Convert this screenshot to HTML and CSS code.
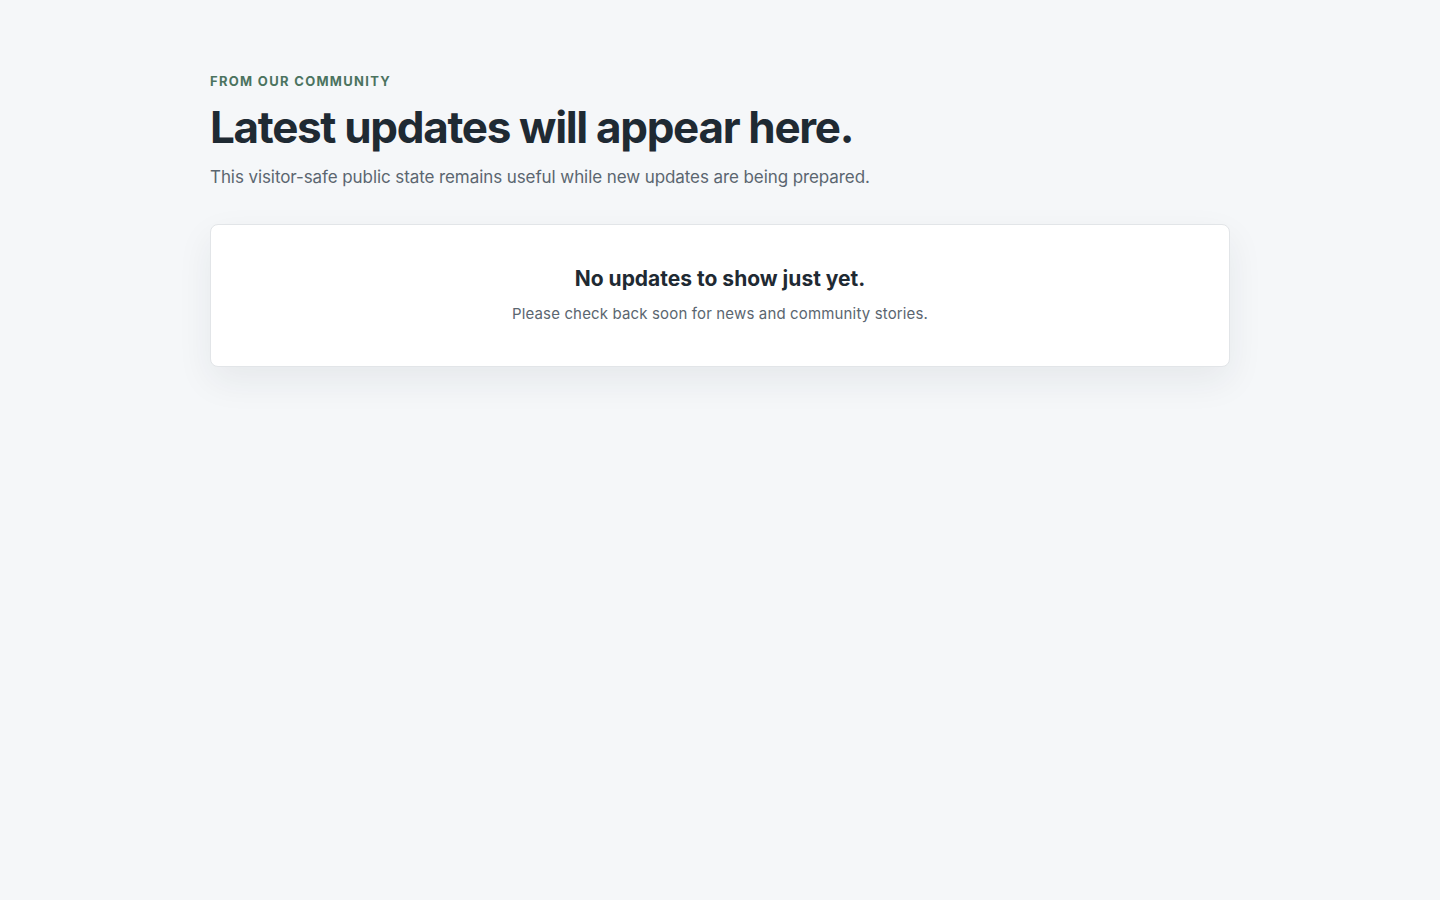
FILE: index.html
```html
<!DOCTYPE html>
<html lang="en">
<head>
<meta charset="utf-8">
<title>Latest updates</title>
<link rel="stylesheet" href="styles.css">
</head>
<body>
<main class="page">
  <header class="intro">
    <p class="eyebrow">From our community</p>
    <h1 class="title">Latest updates will appear here.</h1>
    <p class="lede">This visitor-safe public state remains useful while new updates are being prepared.</p>
  </header>
  <section class="empty-card">
    <h2 class="empty-title">No updates to show just yet.</h2>
    <p class="empty-text">Please check back soon for news and community stories.</p>
  </section>
</main>
</body>
</html>
```

FILE: styles.css
```css
* { box-sizing: border-box; }

html, body {
  margin: 0;
  padding: 0;
}

body {
  background: #f5f7f9;
  font-family: Inter, "Noto Sans", "Liberation Sans", sans-serif;
  color: #1f2a33;
  min-height: 100vh;
}

.page {
  width: 1020px;
  margin: 0 auto;
  padding-top: 72px;
}

.intro {
  display: flex;
  flex-direction: column;
}

.eyebrow {
  margin: 0;
  font-size: 13px;
  line-height: 18px;
  font-weight: 700;
  letter-spacing: 0.1em;
  text-transform: uppercase;
  color: #4b735f;
}

.title {
  margin: 10px 0 0;
  font-size: 44px;
  line-height: 54px;
  font-weight: 700;
  letter-spacing: -0.03em;
  color: #1f2a33;
}

.lede {
  margin: 10px 0 0;
  font-size: 17px;
  line-height: 26px;
  letter-spacing: -0.005em;
  color: #5b6670;
}

.empty-card {
  margin-top: 34px;
  background: #ffffff;
  border: 1px solid #e2e5e8;
  border-radius: 8px;
  box-shadow: 0 14px 36px rgba(31, 42, 51, 0.07);
  padding: 40px 24px 40px;
  text-align: center;
}

.empty-title {
  margin: 0;
  font-size: 21px;
  line-height: 28px;
  font-weight: 700;
  color: #1f2a33;
}

.empty-text {
  margin: 9px 0 0;
  font-size: 15px;
  line-height: 24px;
  letter-spacing: 0.01em;
  color: #5b6670;
}
```
